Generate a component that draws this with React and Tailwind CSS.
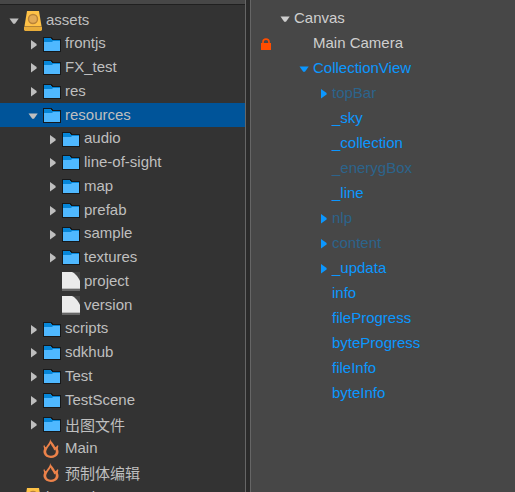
const ASSETS = [
  { name: 'assets', kind: 'db', depth: 0, arrow: 'down' },
  { name: 'frontjs', kind: 'folder', depth: 1, arrow: 'right' },
  { name: 'FX_test', kind: 'folder', depth: 1, arrow: 'right' },
  { name: 'res', kind: 'folder', depth: 1, arrow: 'right' },
  { name: 'resources', kind: 'folder', depth: 1, arrow: 'down', selected: true },
  { name: 'audio', kind: 'folder', depth: 2, arrow: 'right' },
  { name: 'line-of-sight', kind: 'folder', depth: 2, arrow: 'right' },
  { name: 'map', kind: 'folder', depth: 2, arrow: 'right' },
  { name: 'prefab', kind: 'folder', depth: 2, arrow: 'right' },
  { name: 'sample', kind: 'folder', depth: 2, arrow: 'right' },
  { name: 'textures', kind: 'folder', depth: 2, arrow: 'right' },
  { name: 'project', kind: 'file', depth: 2 },
  { name: 'version', kind: 'file', depth: 2 },
  { name: 'scripts', kind: 'folder', depth: 1, arrow: 'right' },
  { name: 'sdkhub', kind: 'folder', depth: 1, arrow: 'right' },
  { name: 'Test', kind: 'folder', depth: 1, arrow: 'right' },
  { name: 'TestScene', kind: 'folder', depth: 1, arrow: 'right' },
  { name: '出图文件', kind: 'folder', depth: 1, arrow: 'right', cjk: true },
  { name: 'Main', kind: 'scene', depth: 1 },
  { name: '预制体编辑', kind: 'scene', depth: 1, cjk: true },
  { name: 'internal', kind: 'db', depth: 0, arrow: 'right', spaced: true },
];

const NODES = [
  { name: 'Canvas', depth: 0, arrow: 'down', tone: 'plain' },
  { name: 'Main Camera', depth: 1, tone: 'plain', locked: true },
  { name: 'CollectionView', depth: 1, arrow: 'down', tone: 'blue' },
  { name: 'topBar', depth: 2, arrow: 'right', tone: 'dim' },
  { name: '_sky', depth: 2, tone: 'blue' },
  { name: '_collection', depth: 2, tone: 'blue' },
  { name: '_enerygBox', depth: 2, tone: 'dim' },
  { name: '_line', depth: 2, tone: 'blue' },
  { name: 'nlp', depth: 2, arrow: 'right', tone: 'dim' },
  { name: 'content', depth: 2, arrow: 'right', tone: 'dim' },
  { name: '_updata', depth: 2, arrow: 'right', tone: 'blue' },
  { name: 'info', depth: 2, tone: 'blue' },
  { name: 'fileProgress', depth: 2, tone: 'blue' },
  { name: 'byteProgress', depth: 2, tone: 'blue' },
  { name: 'fileInfo', depth: 2, tone: 'blue' },
  { name: 'byteInfo', depth: 2, tone: 'blue' },
];

const ASSET_INDENT = ['pl-[8px]', 'pl-[27px]', 'pl-[46px]'];
const NODE_INDENT = ['pl-[4px]', 'pl-[23px]', 'pl-[42px]'];
const TONES = { plain: 'text-[#cfcfcf]', blue: 'text-[#0b97ff]', dim: 'text-[#2c648c]' };

function Arrow({ dir }) {
  return (
    <svg width="12" height="12" viewBox="0 0 12 12" className="shrink-0" fill="currentColor">
      {dir === 'down' && <path d="M1.5 3.5h9.2L7 8.8H5.2z" />}
      {dir === 'right' && <path d="M4 1v9.6l5.6-4V5z" />}
    </svg>
  );
}

function KindIcon({ kind }) {
  return (
    <svg width="18" height="22" viewBox="0 0 18 22" className="shrink-0">
      {kind === 'folder' && (
        <>
          <path d="M0 4h9v1h1v1h8v13H0z" fill="#171819" />
          <path d="M1 5h7v1h1v1h8v3H1z" fill="#0686d8" />
          <path d="M1 9h8l1-1h7v10H1z" fill="#4fb8ff" />
        </>
      )}
      {kind === 'db' && (
        <>
          <path d="M3 2h12l2.5 15H.5z" fill="#ffc247" />
          <path d="M1 17h16l1 1v3l-1 1H1l-1-1v-3z" fill="#e9ad3a" />
          <path d="M1 17h16v1H1z" fill="#b48435" />
          <circle cx="9" cy="10" r="4.5" fill="#e3aa55" stroke="#b98338" strokeWidth="1.4" />
        </>
      )}
      {kind === 'file' && (
        <>
          <path d="M10 2h8v16H0V6z" fill="#454545" />
          <path d="M0 2h10l2 1 3 3 2 3 1 2v8H0z" fill="#ebebeb" />
          <path d="M0 18h18v1H0z" fill="#bdbdbd" />
          <path d="M0 19h18v2H0z" fill="#666" />
        </>
      )}
      {kind === 'scene' && (
        <>
          <path
            fill="#ec824a"
            fillRule="evenodd"
            d="M7.2 2c.2 1.5 1.2 2.4 2.3 3.8 1 1.3 2 2.700 2.800 4.400L14 9c-.2 1.400.3 2.200 1 3.400.6 1.200.7 2.700.3 4-1 2.800-4 4.600-7.400 4.600S1.600 19.100.7 16.300C.2 14.500.6 13 1.400 11.600 1.700 10.800 1.700 10 1.400 9.200L2.900 10.200C3.700 8.800 4.800 7.600 5.700 6.200 6.600 4.900 7.100 3.500 7.200 2zM7.700 6.500C7 8.300 5.200 9.700 4.200 11.700 3.500 13 3 14.200 3.300 15.500 3.800 17.600 5.700 18.800 7.900 18.800S12.200 17.600 12.700 15.500C13 14.300 12.700 13.600 12.200 12.600L11.200 13.600C10.900 11 8.300 9.300 7.700 6.500z"
          />
          <path d="M1 8.500l1 4M14.800 8.500l-1 4.500" stroke="#ec824a" strokeWidth="1.200" />
        </>
      )}
    </svg>
  );
}

function AssetRow({ item }) {
  return (
    <li
      className={`flex shrink-0 items-center ${item.cjk ? 'h-[24.25px]' : 'h-[23.75px]'} ${ASSET_INDENT[item.depth]} ${item.selected ? 'bg-[#005499]' : ''} ${item.spaced ? 'mt-[1px]' : ''}`}
    >
      <span className="flex h-3 pt-px">
        <Arrow dir={item.arrow} />
      </span>
      <span className="ml-1 flex">
        <KindIcon kind={item.kind} />
      </span>
      <span className={`ml-[4px] whitespace-nowrap leading-6 ${item.cjk ? 'pt-[3.5px]' : 'pb-[0.5px]'}`}>{item.name}</span>
    </li>
  );
}

function NodeRow({ item }) {
  return (
    <li className={`flex h-[25px] shrink-0 items-center ${TONES[item.tone]}`}>
      <span className="flex w-[24px] justify-center pl-[6px]">
        {item.locked && (
          <svg width="10" height="12" viewBox="0 0 10 12" className="mt-[3px] text-[#ff4d00]">
            <path d="M2 6V3.800C2 .2 8 .2 8 3.800V6" fill="none" stroke="currentColor" strokeWidth="1.600" />
            <path d="M0 5h10v7H0z" fill="currentColor" />
          </svg>
        )}
      </span>
      <span className={`flex items-center ${NODE_INDENT[item.depth]}`}>
        <span className={`flex h-3 pt-px ${item.tone === 'plain' ? '' : 'text-[#0b97ff]'}`}>
          <Arrow dir={item.arrow} />
        </span>
        <span className="ml-[3px] whitespace-nowrap leading-6">{item.name}</span>
      </span>
    </li>
  );
}

export default function App() {
  return (
    <main className="flex h-[492px] w-[515px] overflow-hidden bg-[#2b2b2b] font-['Liberation_Sans','Noto_Sans_CJK_SC',sans-serif] text-[15px]">
      <section className="flex w-[245px] shrink-0 flex-col overflow-hidden bg-[#333] text-[#bfbfbf]">
        <div className="h-[5px] shrink-0 border-b border-[#202020] bg-[#474747]" />
        <ul className="flex flex-col pt-[3px]">
          {ASSETS.map((item) => (
            <AssetRow key={item.name} item={item} />
          ))}
        </ul>
      </section>
      <div className="w-[6px] shrink-0 border-x border-[#666] bg-[#2b2b2b]" />
      <section className="flex-1 overflow-hidden bg-[#474747]">
        <ul className="flex flex-col pt-[5px]">
          {NODES.map((item) => (
            <NodeRow key={item.name} item={item} />
          ))}
        </ul>
      </section>
    </main>
  );
}
